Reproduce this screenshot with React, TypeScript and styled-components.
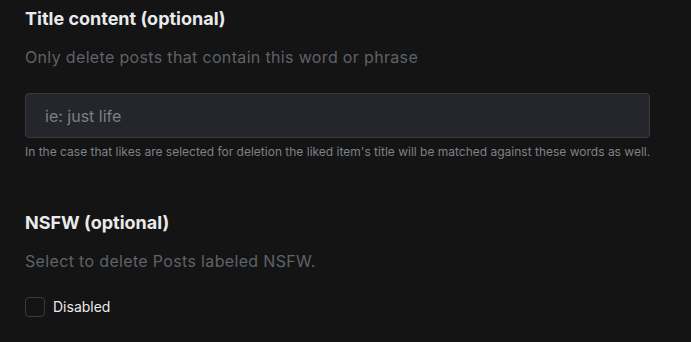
import React from "react";
import styled, { createGlobalStyle } from "styled-components";

const GlobalStyle = createGlobalStyle`
  html, body {
    margin: 0;
    padding: 0;
    background: #141414;
  }
  body {
    font-family: Inter, "Noto Sans", sans-serif;
  }
`;

//styled-components
const Page = styled.div`
  width: 691px;
  height: 342px;
  box-sizing: border-box;
  padding: 7px 41px 0 25px;
  display: flex;
  flex-direction: column;
  background: #141414;
  overflow: hidden;
`;

const Section = styled.section<{ $gap?: number }>`
  display: flex;
  flex-direction: column;
  margin-top: ${(p) => p.$gap ?? 0}px;
`;

const Title = styled.h3`
  margin: 0;
  font-size: 18px;
  line-height: 24px;
  font-weight: 700;
  color: #e9eaec;
`;

const Description = styled.p`
  margin: 14px 0 0;
  font-size: 16px;
  line-height: 24px;
  letter-spacing: 0.34px;
  color: #5f6268;
`;

const Input = styled.input`
  margin-top: 24px;
  height: 45px;
  box-sizing: border-box;
  width: 100%;
  padding: 0 19px;
  background: #25262b;
  border: 1px solid #373a40;
  border-radius: 4px;
  font-family: Inter, "Noto Sans", sans-serif;
  font-size: 16px;
  color: #c1c2c5;
  outline: none;

  &::placeholder {
    color: #7c7e84;
  }
`;

const Helper = styled.p`
  margin: 6px 0 0;
  font-size: 12px;
  line-height: 16px;
  white-space: nowrap;
  color: #7f8186;
`;

const CheckRow = styled.label`
  margin-top: 24px;
  display: flex;
  align-items: center;
  gap: 8px;
  font-size: 14px;
  line-height: 20px;
  color: #e9eaec;
`;

const Box = styled.span`
  width: 20px;
  height: 20px;
  box-sizing: border-box;
  border: 1px solid #373a40;
  border-radius: 4px;
  background: #141414;
`;

const App: React.FC = () => {
  return (
    <>
      <GlobalStyle />
      <Page>
        <Section>
          <Title>Title content (optional)</Title>
          <Description>Only delete posts that contain this word or phrase</Description>
          <Input placeholder="ie: just life" />
          <Helper>
            In the case that likes are selected for deletion the liked item's title will be matched
            against these words as well.
          </Helper>
        </Section>

        <Section $gap={51}>
          <Title>NSFW (optional)</Title>
          <Description>Select to delete Posts labeled NSFW.</Description>
          <CheckRow>
            <Box />
            Disabled
          </CheckRow>
        </Section>
      </Page>
    </>
  );
};

export default App;
